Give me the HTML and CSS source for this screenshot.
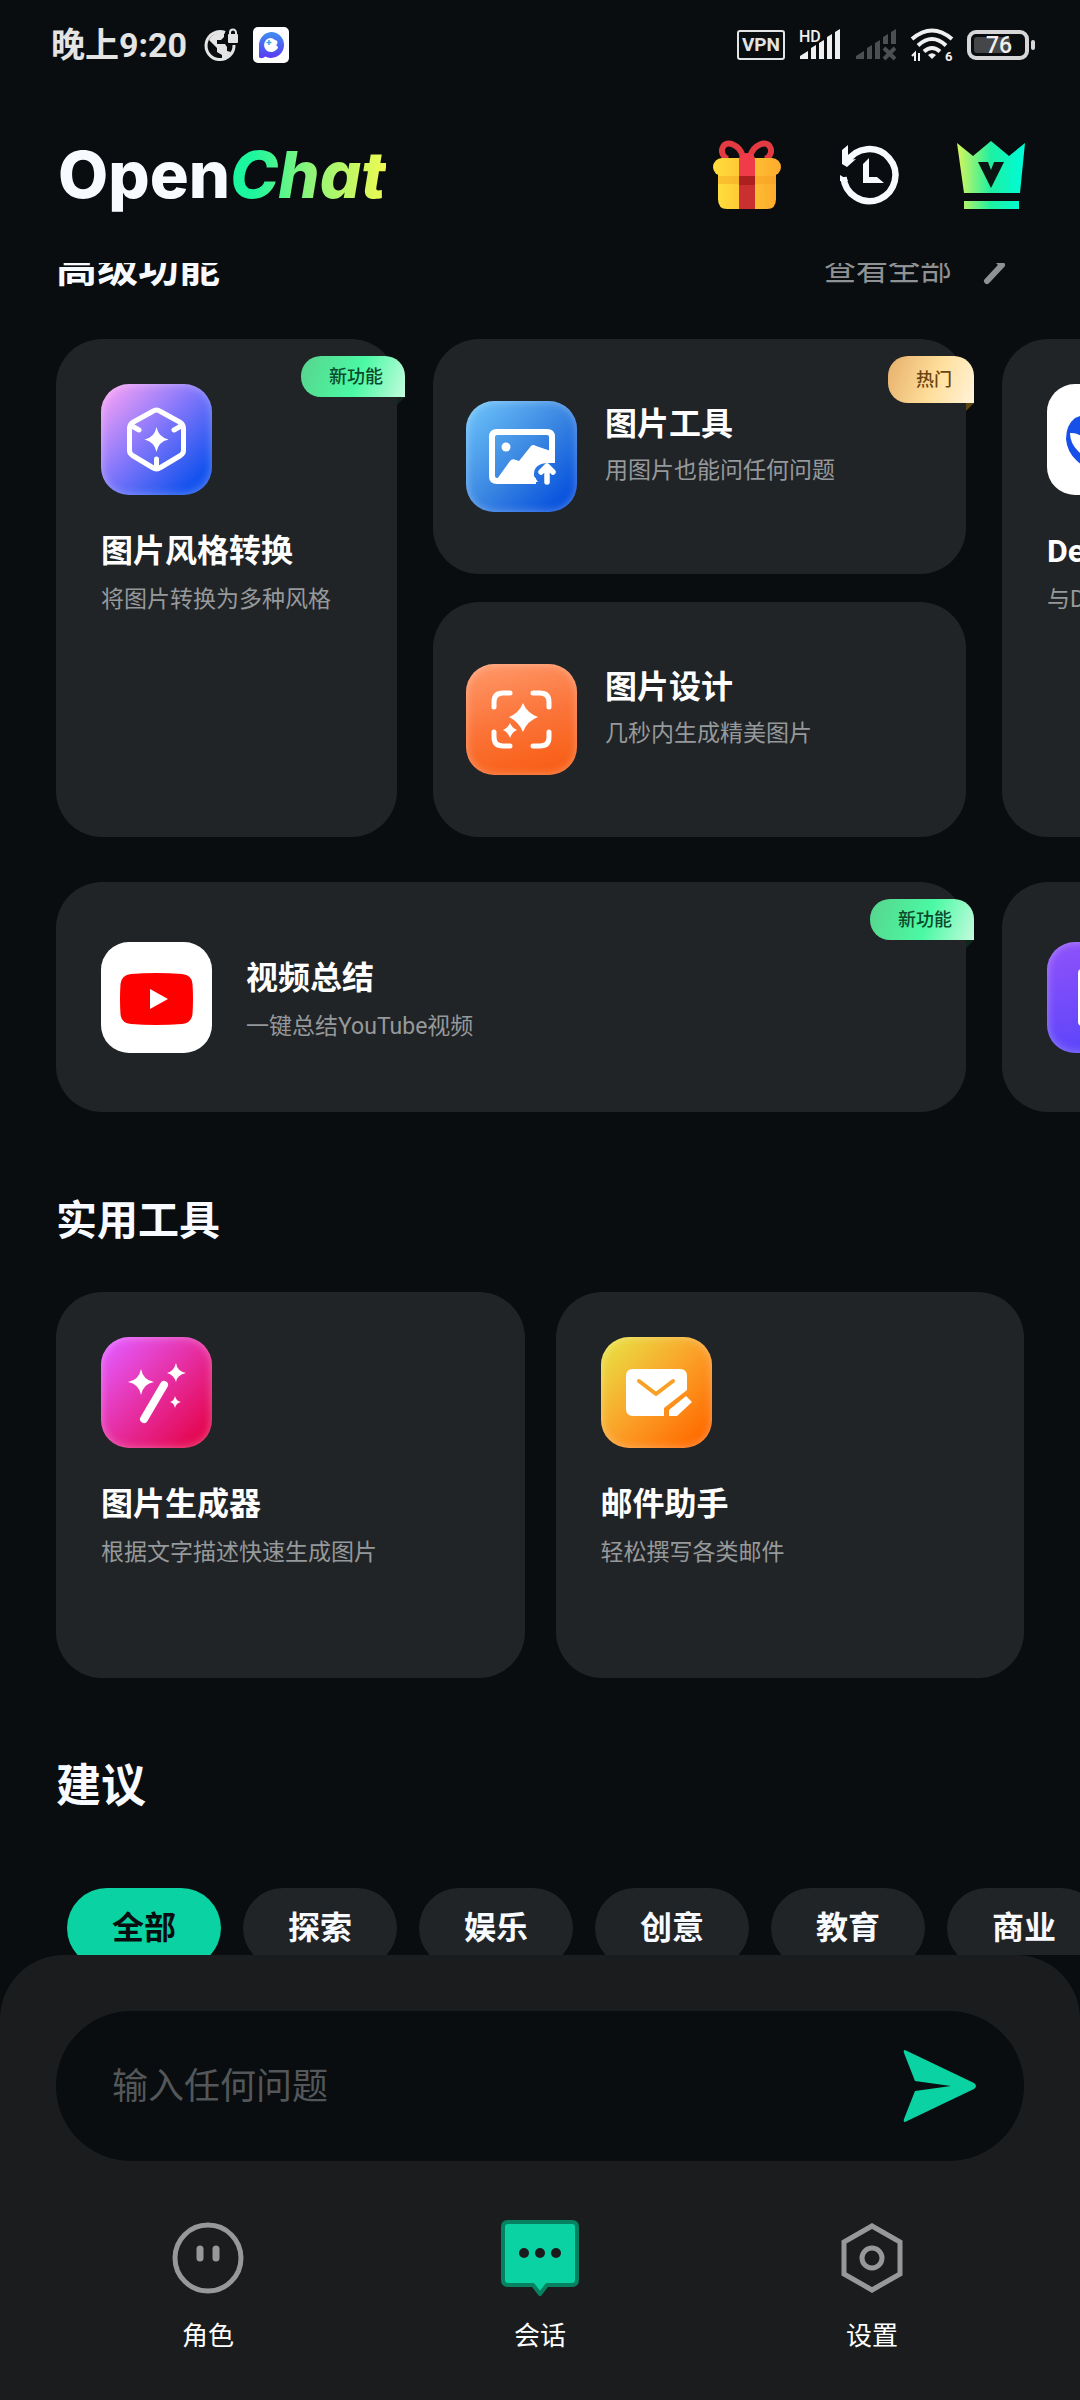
FILE: index.html
```html
<!DOCTYPE html>
<html lang="zh-CN">
<head>
    <meta charset="UTF-8">
    <meta name="viewport" content="width=device-width, initial-scale=1.0">
    <title>OpenChat</title>
    <link rel="stylesheet" href="styles.css">
</head>
<body>
<div class="app">
    <div class="status-bar">
        <div class="status-left">
            <span class="clock">晚上9:20</span>
            <svg width="34" height="34" viewBox="0 0 34 34">
                <path d="M20 4.500A14 14 0 1 0 29 17" fill="none" stroke="#e4e4e4" stroke-width="3"/>
                <path d="M12 5l7-2v6l-3 3h-4v4h8l2 3v4l4 1-4 6-5 1v-4l-5-3v-4l-8-8q2-5 8-7z" fill="#e4e4e4"/>
                <rect x="23" y="6" width="10" height="9" rx="1" fill="#e4e4e4"/>
                <path d="M25 7V4.500a3 3 0 0 1 6 0V7" fill="none" stroke="#e4e4e4" stroke-width="2"/>
            </svg>
            <svg width="36" height="36" viewBox="0 0 36 36">
                <defs>
                    <linearGradient id="petal" x1="0" y1="0" x2="0" y2="1">
                        <stop offset="0" stop-color="#3f8ff0"/>
                        <stop offset="1" stop-color="#5a3af5"/>
                    </linearGradient>
                </defs>
                <rect width="36" height="36" rx="5" fill="#fff"/>
                <path d="M18 5a13 13 0 1 1-6 24.500c-1 2-6 2.500-6 0V18A13 13 0 0 1 18 5z" fill="url(#petal)"/>
                <path d="M18 11a7 7 0 1 0 5 12c2-1 3-3 0-5 3-2 1-5-1-5a7 7 0 0 0-4-2z" fill="#fff"/>
                <path d="M16 13v5m-2.500-2.500h5" stroke="#39a6ee" stroke-width="1.500"/>
            </svg>
        </div>
        <div class="status-right">
            <span class="vpn">VPN</span>
            <svg width="42" height="34" viewBox="0 0 42 34">
                <text class="hd" x="0" y="14">HD</text>
                <path d="M1 31v-3l8-5v8zM12 31V20l5-3v14zM20 31V15l5-3v19zM28 31V9l5-3v25zM36 31V4l5-3v30z" fill="#f0f0f0"/>
            </svg>
            <svg width="42" height="34" viewBox="0 0 42 34">
                <path d="M1 31v-3l8-5v8zM12 31V20l5-3v14zM20 31V15l5-3v19zM28 16V9l5-3v10zM36 16V4l5-3v15z" fill="#4c4f51"/>
                <path d="M29 20l11 11m0-11L29 31" stroke="#4c4f51" stroke-width="4"/>
            </svg>
            <svg width="42" height="34" viewBox="0 0 42 34">
                <g fill="none" stroke="#f0f0f0" stroke-width="4">
                    <path d="M1 11q20-17 40 0"/>
                    <path d="M7 17.500q14-13 28 0"/>
                    <path d="M13 23.500q8-7 16 0"/>
                </g>
                <path d="M17 27q4-3.500 8 0l-4 4z" fill="#f0f0f0"/>
                <path d="M4 33v-8l-3 3M8 25v8" fill="none" stroke="#f0f0f0" stroke-width="2"/>
                <text class="wifi-gen" x="34" y="33">6</text>
            </svg>
            <svg width="68" height="34" viewBox="0 0 68 34">
                <rect x="2" y="4" width="58" height="26" rx="7" fill="none" stroke="#d6d6d6" stroke-width="4"/>
                <rect x="7" y="9" width="36" height="16" rx="3" fill="#444648"/>
                <rect x="64" y="12" width="4" height="10" rx="2" fill="#d6d6d6"/>
                <text class="battery" x="32" y="25">76</text>
            </svg>
        </div>
    </div>

    <header class="header">
        <h1 class="logo">Open<em>Chat</em></h1>
        <div class="header-actions">
            <button class="icon-btn" aria-label="礼物">
                <svg width="70" height="70" viewBox="0 0 70 70">
                    <defs>
                        <linearGradient id="boxFill">
                            <stop offset="0" stop-color="#ffdd3c"/>
                            <stop offset="1" stop-color="#fdab2c"/>
                        </linearGradient>
                    </defs>
                    <path d="M31 17C28 4 14 0 11 7c-3 5 1 11 5 12M38 17C41 4 55 0 58 7c3 5-1 11-5 12" fill="none" stroke="#e43a41" stroke-width="6"/>
                    <path d="M6 30h58v29q0 10-9 10H15q-9 0-9-10z" fill="url(#boxFill)"/>
                    <rect x="1" y="18" width="68" height="18" rx="9" fill="url(#boxFill)"/>
                    <path d="M6 36h58v8H6z" fill="#f39a1e" opacity=".4"/>
                    <path d="M27 36V20q0-7 8-7t8 7v16z" fill="#f03c49"/>
                    <path d="M27 36h16v33H27z" fill="#c9302f"/>
                    <path d="M27 36h16v9H27z" fill="#ae1f1f"/>
                </svg>
            </button>
            <button class="icon-btn" aria-label="历史记录">
                <svg width="70" height="70" viewBox="0 0 70 70" fill="#f7faff">
                    <path d="M9.500 37A26 26 0 1 0 13 22" fill="none" stroke="#f7faff" stroke-width="6.500"/>
                    <path d="M8 10l6-5v15l8-1-9 8-5-3zM6 41l6 2 2-3-8-5zM29 24l6-6v19h8l7 6H29z"/>
                </svg>
            </button>
            <button class="icon-btn" aria-label="会员">
                <svg width="70" height="70" viewBox="0 0 70 70">
                    <defs>
                        <linearGradient id="crown" gradientUnits="userSpaceOnUse" x1="4" y1="0" x2="66" y2="0">
                            <stop offset="0" stop-color="#c8f562"/>
                            <stop offset=".5" stop-color="#1ef0a2"/>
                            <stop offset="1" stop-color="#00fbd6"/>
                        </linearGradient>
                    </defs>
                    <path d="M1 3l16 13L35 1l18 15L69 3l-5 50H8zM8 61h55v8H8z" fill="url(#crown)"/>
                    <path d="M22 22h10l3 8 3-8h10L35 48z" fill="#0b1512"/>
                </svg>
            </button>
        </div>
    </header>

    <main class="content">
        <section class="section first">
            <div class="section-head">
                <h2>高级功能</h2>
                <a class="view-all" href="#">查看全部
                    <svg width="22" height="40" viewBox="0 0 22 40">
                        <path d="M3 3l15 16L3 35" fill="none" stroke="#8f9193" stroke-width="6" stroke-linecap="round" stroke-linejoin="round"/>
                    </svg>
                </a>
            </div>

            <div class="shelf">
                <a class="card tall" href="#">
                    <span class="badge badge-new">新功能</span>
                    <span class="tile tile-style">
                        <svg width="111" height="111" viewBox="0 0 111 111" fill="none" stroke="#fff" stroke-width="5" stroke-linecap="round" stroke-linejoin="round">
                            <path d="M55.500 26q2 0 4 1.500l20 11q3 2 3 6v22q0 3-3 5l-20 12q-4 3-8 0l-20-12q-3-2-3-5v-22q0-4 3-6l20-11q2-1.500 4-1.500zM31 42l7 4M80 42l-7 4M55.500 75v9"/>
                            <path d="M55.500 43q2 10 12 12.500q-10 2-12 12.500q-2-10-12-12.500q10-2 12-12.500z" fill="#fff" stroke="none"/>
                        </svg>
                    </span>
                    <span class="card-text">
                        <strong>图片风格转换</strong>
                        <small>将图片转换为多种风格</small>
                    </span>
                </a>

                <div class="stack">
                    <a class="card row" href="#">
                        <span class="badge badge-hot">热门</span>
                        <span class="tile tile-image">
                            <svg width="111" height="111" viewBox="0 0 111 111">
                                <path d="M70 80H31q-5 0-5-5V36q0-5 5-5h50q5 0 5 5v26" fill="none" stroke="#fff" stroke-width="6"/>
                                <circle cx="40" cy="46" r="4.500" fill="#fff"/>
                                <path d="M31 78l13-18q2-3 6-1l3 1 12-15q2-2 5 0l15 5v12q-18-1-17 13l4 6H31z" fill="#fff"/>
                                <path d="M81 81V66m-6 5l6-6 6 6" fill="none" stroke="#fff" stroke-width="5.500" stroke-linecap="round" stroke-linejoin="round"/>
                            </svg>
                        </span>
                        <span class="card-text">
                            <strong>图片工具</strong>
                            <small>用图片也能问任何问题</small>
                        </span>
                    </a>
                    <a class="card row" href="#">
                        <span class="tile tile-design">
                            <svg width="111" height="111" viewBox="0 0 111 111">
                                <path d="M28 43v-5q0-9 9-9h7M67 29h7q9 0 9 9v5M83 68v5q0 9-9 9h-7M44 82h-7q-9 0-9-9v-5" fill="none" stroke="#fff" stroke-width="5" stroke-linecap="round"/>
                                <path d="M57 39q4 10 15 14q-11 4-15 15q-4-10-14-15q10-4 14-14zM44 59q2 5 7 7q-5 2-7 8q-2-6-7-8q5-2 7-7z" fill="#fff"/>
                            </svg>
                        </span>
                        <span class="card-text">
                            <strong>图片设计</strong>
                            <small>几秒内生成精美图片</small>
                        </span>
                    </a>
                </div>

                <a class="card tall" href="#">
                    <span class="tile tile-white">
                        <svg width="111" height="111" viewBox="0 0 111 111">
                            <path d="M19 55q0-14 9-21q18-9 33 7q9 10 20 2l8-9q6 12-4 22q0 20-16 27q-23 9-39-6q-10-9-11-22z" fill="#1650e8"/>
                            <path d="M23 49q9-1 16 8q8 15 21 18q-18 4-29-8q-8-8-8-18z" fill="#fff"/>
                        </svg>
                    </span>
                    <span class="card-text">
                        <strong>DeepSeek</strong>
                        <small>与DeepSeek对话</small>
                    </span>
                </a>
            </div>

            <div class="shelf">
                <a class="card wide" href="#">
                    <span class="badge badge-new">新功能</span>
                    <span class="tile tile-white">
                        <svg width="111" height="111" viewBox="0 0 111 111">
                            <path d="M30 32q25-2 51 0q10 1 10.500 10q1 15 0 30q-1 9-10.500 10q-26 2-51 0q-10-1-10.500-10q-1-15 0-30q1-9 10.500-10z" fill="#f00"/>
                            <path d="M49 47v20l18-10z" fill="#fff"/>
                        </svg>
                    </span>
                    <span class="card-text">
                        <strong>视频总结</strong>
                        <small>一键总结YouTube视频</small>
                    </span>
                </a>
                <a class="card wide" href="#" aria-label="文档">
                    <span class="tile tile-doc">
                        <svg width="111" height="111" viewBox="0 0 111 111">
                            <rect x="31" y="27" width="50" height="57" rx="4" fill="#fff"/>
                        </svg>
                    </span>
                </a>
            </div>
        </section>

        <section class="section">
            <h2>实用工具</h2>
            <div class="tools">
                <a class="card" href="#">
                    <span class="tile tile-magic">
                        <svg width="111" height="111" viewBox="0 0 111 111">
                            <path d="M43 82l20-34" stroke="#fff" stroke-width="8" stroke-linecap="round"/>
                            <path d="M40 32q2 11 13 13q-11 2-13 13q-2-11-13-13q11-2 13-13zM75 26q1 8 10 10q-9 2-10 9q-2-7-9-9q7-2 9-10zM74 59q1 5 6 6q-5 1-6 6q-1-5-5-6q4-1 5-6z" fill="#fff"/>
                        </svg>
                    </span>
                    <span class="card-text">
                        <strong>图片生成器</strong>
                        <small>根据文字描述快速生成图片</small>
                    </span>
                </a>
                <a class="card" href="#">
                    <span class="tile tile-mail">
                        <svg width="111" height="111" viewBox="0 0 111 111">
                            <path d="M32 32h47q7 0 7 7v14L63 71v8H32q-7 0-7-7V39q0-7 7-7z" fill="#fff"/>
                            <path d="M38 44l17 13 17-13" fill="none" stroke="#f8a024" stroke-width="4" stroke-linecap="round" stroke-linejoin="round"/>
                            <path d="M68 73l17-14 6 6-15 14h-8z" fill="#fff"/>
                        </svg>
                    </span>
                    <span class="card-text">
                        <strong>邮件助手</strong>
                        <small>轻松撰写各类邮件</small>
                    </span>
                </a>
            </div>
        </section>

        <section class="section suggest">
            <h2>建议</h2>
            <div class="chips">
                <button class="chip active">全部</button>
                <button class="chip">探索</button>
                <button class="chip">娱乐</button>
                <button class="chip">创意</button>
                <button class="chip">教育</button>
                <button class="chip">商业</button>
            </div>
        </section>
    </main>

    <footer class="bottom">
        <form class="ask">
            <input type="text" placeholder="输入任何问题" aria-label="输入任何问题">
            <button class="icon-btn" type="button" aria-label="发送">
                <svg width="72" height="74" viewBox="0 0 72 74">
                    <path d="M1 1l69 33q4 3 0 6L1 73q-2 0-1-3l11-28 36-5-36-5L0 4q-1-3 1-3z" fill="#0ad2a2"/>
                </svg>
            </button>
        </form>
        <nav class="tabs">
            <a href="#">
                <svg width="80" height="80" viewBox="0 0 80 80">
                    <circle cx="40" cy="40" r="33" fill="none" stroke="#96989a" stroke-width="5"/>
                    <path d="M32 31v9M48 31v9" stroke="#96989a" stroke-width="7" stroke-linecap="round"/>
                </svg>
                角色
            </a>
            <a href="#">
                <svg width="80" height="80" viewBox="0 0 80 80">
                    <path d="M8 4h64q5 0 5 5v53q0 5-5 5H47l-7 9-7-9H8q-5 0-5-5V9q0-5 5-5z" fill="#0ad2a2" stroke="#078260" stroke-width="4" stroke-linejoin="round"/>
                    <g fill="#1a1c1e">
                        <circle cx="24" cy="35" r="5"/>
                        <circle cx="40" cy="35" r="5"/>
                        <circle cx="56" cy="35" r="5"/>
                    </g>
                </svg>
                会话
            </a>
            <a href="#">
                <svg width="80" height="80" viewBox="0 0 80 80" fill="none" stroke="#96989a" stroke-width="5">
                    <path d="M40 8l28 16v32L40 72 12 56V24z"/>
                    <circle cx="40" cy="40" r="10"/>
                </svg>
                设置
            </a>
        </nav>
    </footer>
</div>
</body>
</html>
```
FILE: styles.css
```css
* {
    box-sizing: border-box;
}
body {
    margin: 0;
    background: #090d0f;
    color: #fff;
    font-family: Roboto, "Noto Sans CJK SC", sans-serif;
}
a {
    color: inherit;
    text-decoration: none;
}
button {
    border: 0;
    font-family: inherit;
    cursor: pointer;
}
svg {
    display: block;
    overflow: visible;
}
.app {
    display: flex;
    flex-direction: column;
    height: 100vh;
}

/* 状态栏 */
.status-bar {
    display: flex;
    justify-content: space-between;
    align-items: center;
    height: 90px;
    padding: 0 45px 0 51px;
    color: #e4e4e4;
}
.status-left,
.status-right {
    display: flex;
    align-items: center;
    gap: 14px;
}
.clock {
    margin-right: 4px;
    font-size: 34px;
    font-weight: 700;
    line-height: 40px;
}
.vpn {
    padding: 0 3px;
    border: 2px solid #e4e4e4;
    border-radius: 3px;
    font-size: 19px;
    font-weight: 700;
    line-height: 26px;
}
.hd,
.wifi-gen,
.battery {
    fill: #f0f0f0;
    font-size: 16px;
    font-weight: 500;
}
.wifi-gen {
    font-size: 13px;
    font-weight: 700;
}
.battery {
    font-size: 23px;
    text-anchor: middle;
}

/* 顶部 */
.header {
    display: flex;
    justify-content: space-between;
    align-items: center;
    height: 173px;
    padding: 0 54px 4px 58px;
}
.logo {
    margin: 0;
    font-family: Inter, sans-serif;
    font-size: 65px;
    font-weight: 800;
    line-height: 80px;
    color: #f7faff;
}
.logo em {
    background: linear-gradient(90deg, #1cf79e 15%, #8bf57a 50%, #f0fa52);
    -webkit-background-clip: text;
    background-clip: text;
    color: transparent;
}
.header-actions {
    display: flex;
    gap: 52px;
}
.icon-btn {
    padding: 0;
    background: none;
}

/* 内容 */
.content {
    flex: 1;
    min-height: 0;
    overflow: hidden;
    padding: 0 56px;
}
.section {
    margin-top: 77px;
}
.section.first {
    margin-top: -27px;
}
h2 {
    margin: 0 0 39px;
    font-size: 41px;
    font-weight: 700;
    line-height: 64px;
    color: #f7faff;
}
.section-head {
    display: flex;
    justify-content: space-between;
}
.view-all {
    display: flex;
    align-items: center;
    gap: 32px;
    height: 60px;
    padding-right: 18px;
    font-size: 32px;
    color: #8f9193;
}
.shelf {
    display: flex;
    gap: 36px;
    margin-bottom: 45px;
}
.stack {
    flex: 0 0 533px;
    display: grid;
    gap: 28px;
}
.card {
    position: relative;
    padding: 45px;
    border-radius: 46px;
    background: #212426;
}
.card.tall {
    flex: 0 0 341px;
}
.card.row {
    display: flex;
    gap: 28px;
    padding: 62px 33px;
}
.card.wide {
    flex: 0 0 910px;
    display: flex;
    align-items: center;
    gap: 34px;
    padding: 60px 45px 59px;
}
.card-text {
    display: flex;
    flex-direction: column;
    gap: 8px;
}
.row .card-text {
    gap: 6px;
}
.wide .card-text {
    padding-top: 4px;
}
.tall .card-text,
.tools .card-text {
    margin-top: 33px;
}
.card strong {
    font-size: 32px;
    font-weight: 700;
    line-height: 46px;
}
.card small {
    font-size: 23px;
    line-height: 36px;
    color: #96999b;
    white-space: nowrap;
}

.tile {
    flex: none;
    display: block;
    width: 111px;
    height: 111px;
    border-radius: 28px;
    box-shadow: inset 0 0 10px rgba(255, 255, 255, 0.35);
}
.tile-style {
    background: linear-gradient(135deg, #f5a0f5 5%, #8477fb 45%, #1553ee 85%);
}
.tile-image {
    background: linear-gradient(135deg, #70c6fb, #3a87e2 50%, #0650dd 90%);
}
.tile-design {
    background: linear-gradient(165deg, #ff9a6c, #fb7439 50%, #f85f17 90%);
}
.tile-white {
    background: #fff;
}
.tile-doc {
    background: linear-gradient(165deg, #9152fa, #5343fa);
}
.tile-magic {
    background: linear-gradient(135deg, #e45bff 5%, #e62da0 50%, #e4064f 90%);
}
.tile-mail {
    background: linear-gradient(135deg, #e7e746, #fba028 50%, #ff6b00 90%);
}

.badge {
    position: absolute;
    top: 17px;
    right: -8px;
    padding: 0 22px 0 28px;
    border-radius: 20px 20px 0 20px;
    font-size: 18px;
    font-weight: 500;
    line-height: 41px;
}
.badge::after {
    content: "";
    position: absolute;
    top: 100%;
    right: 0;
    border-top: 8px solid #10261c;
    border-right: 8px solid transparent;
}
.badge-new {
    background: linear-gradient(110deg, #57d48d, #4bf9a4 55%, #c3fbdd);
    color: #0b4a2b;
}
.badge-hot {
    background: linear-gradient(110deg, #e6b06a, #ffdf9c 55%, #fff3d9);
    color: #6b4410;
    line-height: 47px;
}
.badge-hot::after {
    border-top-color: #5c4413;
}

.tools {
    display: grid;
    grid-template-columns: 1fr 1fr;
    gap: 31px;
}
.tools .card {
    min-height: 386px;
}

.suggest h2 {
    margin-bottom: 69px;
    font-size: 45px;
}
.chips {
    display: flex;
    gap: 22px;
    padding-left: 11px;
}
.chip {
    flex: none;
    padding: 0 45px;
    border-radius: 40px;
    background: #212426;
    color: #f7faff;
    font-size: 32px;
    font-weight: 700;
    line-height: 80px;
}
.chip.active {
    background: #0ad2a2;
    color: #090d0f;
}

/* 底部 */
.bottom {
    padding: 56px 56px 46px;
    border-radius: 64px 64px 0 0;
    background: #1a1c1e;
}
.ask {
    display: flex;
    align-items: center;
    height: 150px;
    padding: 0 48px 0 56px;
    border-radius: 75px;
    background: #090d0f;
}
.ask input {
    flex: 1;
    min-width: 0;
    padding: 2px 0 0;
    border: 0;
    outline: 0;
    background: none;
    color: #fff;
    font: 36px/60px Roboto, "Noto Sans CJK SC", sans-serif;
}
.ask input::placeholder {
    color: #54575a;
}
.tabs {
    display: grid;
    grid-template-columns: repeat(3, 1fr);
    margin: 57px -14px 0;
}
.tabs a {
    display: flex;
    flex-direction: column;
    align-items: center;
    gap: 20px;
    font-size: 26px;
    line-height: 36px;
}
```
